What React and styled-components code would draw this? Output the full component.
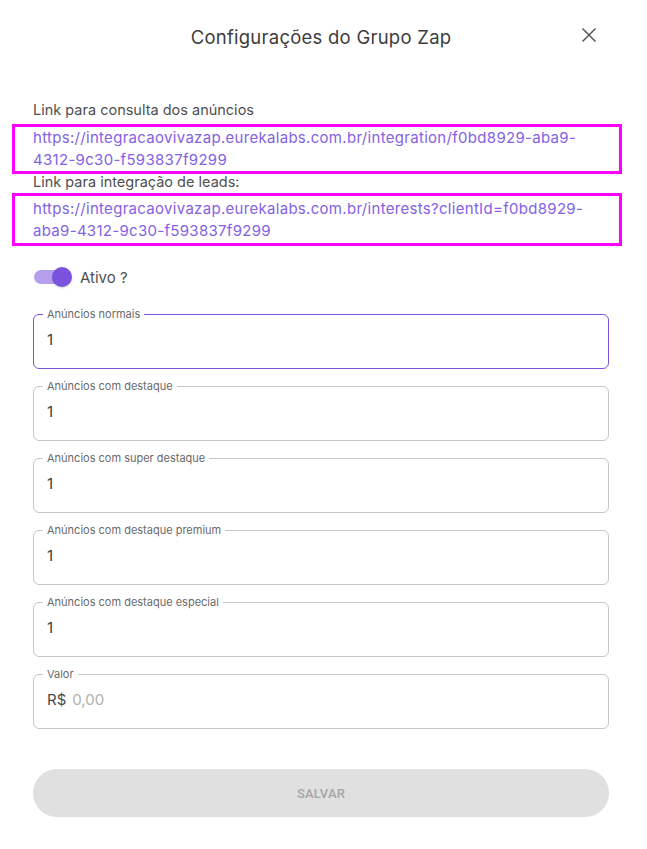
import React from 'react';
import styled, { createGlobalStyle } from 'styled-components';

const GlobalStyle = createGlobalStyle`
  body {
    margin: 0;
    background: #ffffff;
    font-family: "Inter", "Noto Sans", sans-serif;
  }
`;

const fields = [
  { label: 'Anúncios normais', value: '1', focused: true },
  { label: 'Anúncios com destaque', value: '1' },
  { label: 'Anúncios com super destaque', value: '1' },
  { label: 'Anúncios com destaque premium', value: '1' },
  { label: 'Anúncios com destaque especial', value: '1' },
];

function App() {
  return (
    <>
      <GlobalStyle />
      <Modal>
        <Header>
          <Title>Configurações do Grupo Zap</Title>
          <CloseButton aria-label="fechar">
            <svg width="16" height="16" viewBox="0 0 16 16">
              <path d="M1.5 1.5 L14.5 14.5 M14.5 1.5 L1.5 14.5" stroke="#555" strokeWidth="1.5" fill="none" />
            </svg>
          </CloseButton>
        </Header>

        <LinkLabel $first>Link para consulta dos anúncios</LinkLabel>
        <LinkBox $gap={6}>
          <LinkText>https://integracaovivazap.eurekalabs.com.br/integration/f0bd8929-aba9-4312-9c30-f593837f9299</LinkText>
        </LinkBox>
        <LinkLabel>Link para integração de leads:</LinkLabel>
        <LinkBox $gap={3} $extra>
          <LinkText>https://integracaovivazap.eurekalabs.com.br/interests?clientId=f0bd8929-aba9-4312-9c30-f593837f9299</LinkText>
        </LinkBox>

        <SwitchRow>
          <Switch>
            <Track />
            <Thumb />
          </Switch>
          <SwitchLabel>Ativo ?</SwitchLabel>
        </SwitchRow>

        <Fields>
          {fields.map((f) => (
            <Field key={f.label} $focused={f.focused}>
              <Legend>{f.label}</Legend>
              <Value>{f.value}</Value>
            </Field>
          ))}
          <Field>
            <Legend>Valor</Legend>
            <Value>
              <Prefix>R$</Prefix>
              <Placeholder>0,00</Placeholder>
            </Value>
          </Field>
        </Fields>

        <SaveButton disabled>SALVAR</SaveButton>
      </Modal>
    </>
  );
}

const Modal = styled.div`
  width: 647px;
  height: 849px;
  box-sizing: border-box;
  padding: 0 38px 0 33px;
  display: flex;
  flex-direction: column;
`;

const Header = styled.div`
  height: 72px;
  display: flex;
  align-items: center;
  justify-content: center;
  position: relative;
  padding-top: 2px;
  box-sizing: border-box;
`;

const Title = styled.h2`
  margin: 0;
  font-size: 18.5px;
  font-weight: 400;
  color: #3d3d3d;
  letter-spacing: 0.25px;
`;

const CloseButton = styled.button`
  position: absolute;
  right: 12px;
  top: 27px;
  border: none;
  background: none;
  padding: 0;
  width: 16px;
  height: 16px;
  cursor: pointer;
`;

const LinkLabel = styled.div`
  margin-top: ${(p) => (p.$first ? '30px' : '0')};
  font-size: 14.5px;
  color: #505050;
  line-height: 16px;
`;

const LinkBox = styled.div`
  margin: ${(p) => p.$gap}px -13px 0 -21px;
  border: 3px solid #ff00ff;
  padding: ${(p) => (p.$extra ? '2px 20px 1px 18px' : '0 20px 0 18px')};
`;

const LinkText = styled.div`
  font-size: 15px;
  line-height: 22px;
  letter-spacing: 0.3px;
  color: #8462e4;
  word-break: break-word;
`;

const SwitchRow = styled.div`
  margin-top: 19px;
  display: flex;
  align-items: center;
  gap: 8px;
  height: 24px;
`;

const Switch = styled.div`
  position: relative;
  width: 39px;
  height: 22px;
`;

const Track = styled.div`
  position: absolute;
  left: 1px;
  top: 4px;
  width: 32px;
  height: 14px;
  border-radius: 7px;
  background: #b6a0ee;
`;

const Thumb = styled.div`
  position: absolute;
  right: 0;
  top: 1px;
  width: 20px;
  height: 20px;
  border-radius: 50%;
  background: #7b52de;
  box-shadow: 0 1px 2px rgba(0, 0, 0, 0.2);
`;

const SwitchLabel = styled.span`
  font-size: 15px;
  color: #505050;
`;

const Fields = styled.div`
  margin-top: 19px;
  display: flex;
  flex-direction: column;
  gap: 11px;
`;

const Field = styled.fieldset`
  margin: 0;
  height: 61px;
  box-sizing: border-box;
  border: 1px solid ${(p) => (p.$focused ? '#7b52de' : '#c6c6c6')};
  border-radius: 6px;
  padding: 0 13px;
  min-width: 0;
`;

const Legend = styled.legend`
  font-size: 11px;
  color: #6a6a6a;
  padding: 0 4px;
  margin-left: -4px;
  line-height: 12px;
`;

const Value = styled.div`
  font-size: 15px;
  line-height: 20px;
  color: #3c3c3c;
  margin-top: 10px;
  display: flex;
  gap: 6px;
`;

const Prefix = styled.span`
  color: #4a4a4a;
`;

const Placeholder = styled.span`
  color: #b0b0b0;
`;

const SaveButton = styled.button`
  margin-top: 40px;
  height: 48px;
  border: none;
  border-radius: 24px;
  background: #e0e0e0;
  color: #a6a6a6;
  font-family: "Roboto", "Liberation Sans", sans-serif;
  font-size: 13px;
  font-weight: 500;
  letter-spacing: 0.2px;
`;

export default App;
